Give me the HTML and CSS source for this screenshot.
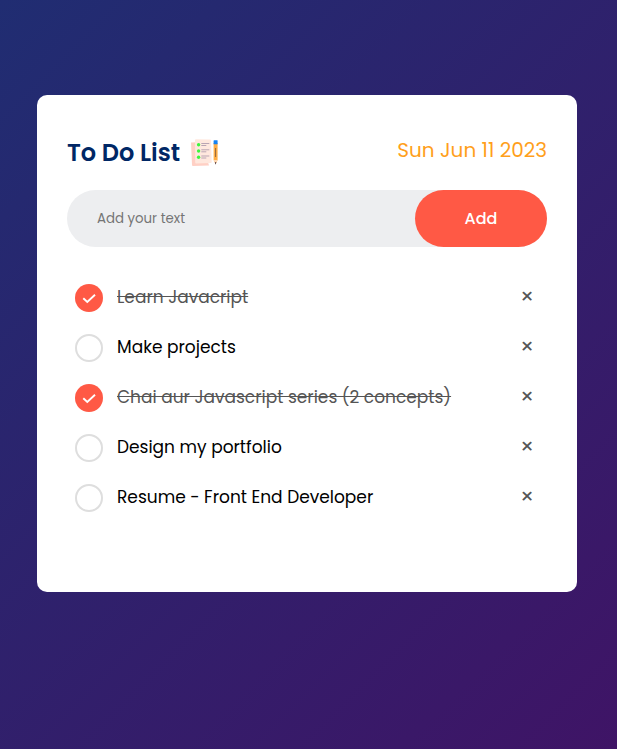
FILE: index.html
```html
<!DOCTYPE html>
<html lang="en">
<head>
<meta charset="utf-8">
<title>To Do List</title>
<link rel="stylesheet" href="styles.css">
</head>
<body>
<main class="todo-app">
  <header class="top">
    <h1 class="title"><span>To Do List</span>
      <svg class="title-icon" viewBox="0 0 30 28" aria-hidden="true">
        <path fill="#ffd0c5" d="M1 3.5 12 3l7 23.5-16 .5Q2 27 2 26z"/>
        <path fill="#ffe8de" d="M5 1Q5 .3 6 .3L20 .5q1 0 1 1l.7 21.5q0 1-1 1l-14.5.5q-1 0-1-1z"/>
        <g fill="#3df63d"><circle cx="8.6" cy="5.8" r="1.7"/><circle cx="8.6" cy="12" r="1.7"/><circle cx="8.6" cy="18.3" r="1.7"/></g>
        <path stroke="#b9a5b3" stroke-width="1" d="M11.3 4.5h8M11.3 6.5h5M11.3 10.8h8M11.3 12.8h5M11.3 17h8M11.3 19h5"/>
        <path fill="#ffad45" d="M23.6 4h4v17l-2 4-2-4z"/>
        <path fill="#1682f2" d="M23.6 1.8q0-.5.5-.5h3q.5 0 .5.5v3.4h-4z"/>
        <path stroke="#94683d" stroke-width="1" d="M25.6 9v9"/>
        <path fill="#ffd9b5" d="M23.6 21h4l-2 4z"/>
        <path fill="#46303a" d="m24.8 23.3h1.6l-.8 2.4z"/>
      </svg>
    </h1>
    <time class="date">Sun Jun 11 2023</time>
  </header>
  <div class="row">
    <input class="entry" type="text" placeholder="Add your text">
    <button class="add">Add</button>
  </div>
  <ul class="list">
    <li class="item checked"><svg class="mark" viewBox="0 0 28 28"><circle cx="14" cy="14" r="14"/><path d="m8.3 14.2 4 3.8 7.7-7.2"/></svg><span class="label">Learn Javacript</span><span class="close">×</span></li>
    <li class="item"><i class="mark ring"></i><span class="label">Make projects</span><span class="close">×</span></li>
    <li class="item checked"><svg class="mark" viewBox="0 0 28 28"><circle cx="14" cy="14" r="14"/><path d="m8.3 14.2 4 3.8 7.7-7.2"/></svg><span class="label">Chai aur Javascript series (2 concepts)</span><span class="close">×</span></li>
    <li class="item"><i class="mark ring"></i><span class="label">Design my portfolio</span><span class="close">×</span></li>
    <li class="item"><i class="mark ring"></i><span class="label">Resume - Front End Developer</span><span class="close">×</span></li>
  </ul>
</main>
</body>
</html>
```

FILE: styles.css
```css
* {
  margin: 0;
  padding: 0;
  box-sizing: border-box;
  font-family: Poppins, "Liberation Sans", sans-serif;
}
body {
  min-height: 100vh;
  padding: 95px 40px 0 37px;
  background: linear-gradient(135deg, #202d72, #3f1466);
}
.todo-app {
  width: 540px;
  height: 497px;
  padding: 40px 30px 0;
  border-radius: 10px;
  background: #fff;
}
.top {
  display: flex;
  justify-content: space-between;
  height: 55px;
}
.title {
  display: flex;
  align-items: center;
  height: 36px;
  color: #002765;
  font-size: 24px;
  font-weight: 600;
  line-height: 34px;
}
.title-icon {
  width: 30px;
  height: 28px;
  margin-left: 10px;
}
.date {
  color: #ff9f1c;
  font-size: 20px;
  line-height: 30px;
}
.row {
  display: flex;
  height: 57px;
  border-radius: 30px;
  background: #edeef0;
}
.entry {
  flex: 1;
  min-width: 0;
  padding-left: 30px;
  border: 0;
  outline: 0;
  background: transparent;
  font-size: 13.333px;
}
.entry::placeholder {
  color: #757575;
}
.add {
  width: 132px;
  border: 0;
  border-radius: 40px;
  background: #ff5945;
  color: #fff;
  font-size: 16px;
  font-weight: 500;
}
.list {
  margin-top: 25px;
  list-style: none;
}
.item {
  display: flex;
  align-items: center;
  height: 50px;
  padding: 0 10px 0 8px;
  font-size: 17px;
}
.mark {
  flex: none;
  width: 28px;
  height: 28px;
  margin: 2px 14px 0 0;
  fill: #ff5945;
}
.mark path {
  fill: none;
  stroke: #fff;
  stroke-width: 1.9;
}
.ring {
  border: 2px solid #dedede;
  border-radius: 50%;
}
.label {
  white-space: nowrap;
}
.checked .label {
  color: #555;
  text-decoration: line-through;
}
.close {
  width: 20px;
  margin-left: auto;
  color: #555;
  font-size: 22px;
  line-height: 30px;
  text-align: center;
}
```
